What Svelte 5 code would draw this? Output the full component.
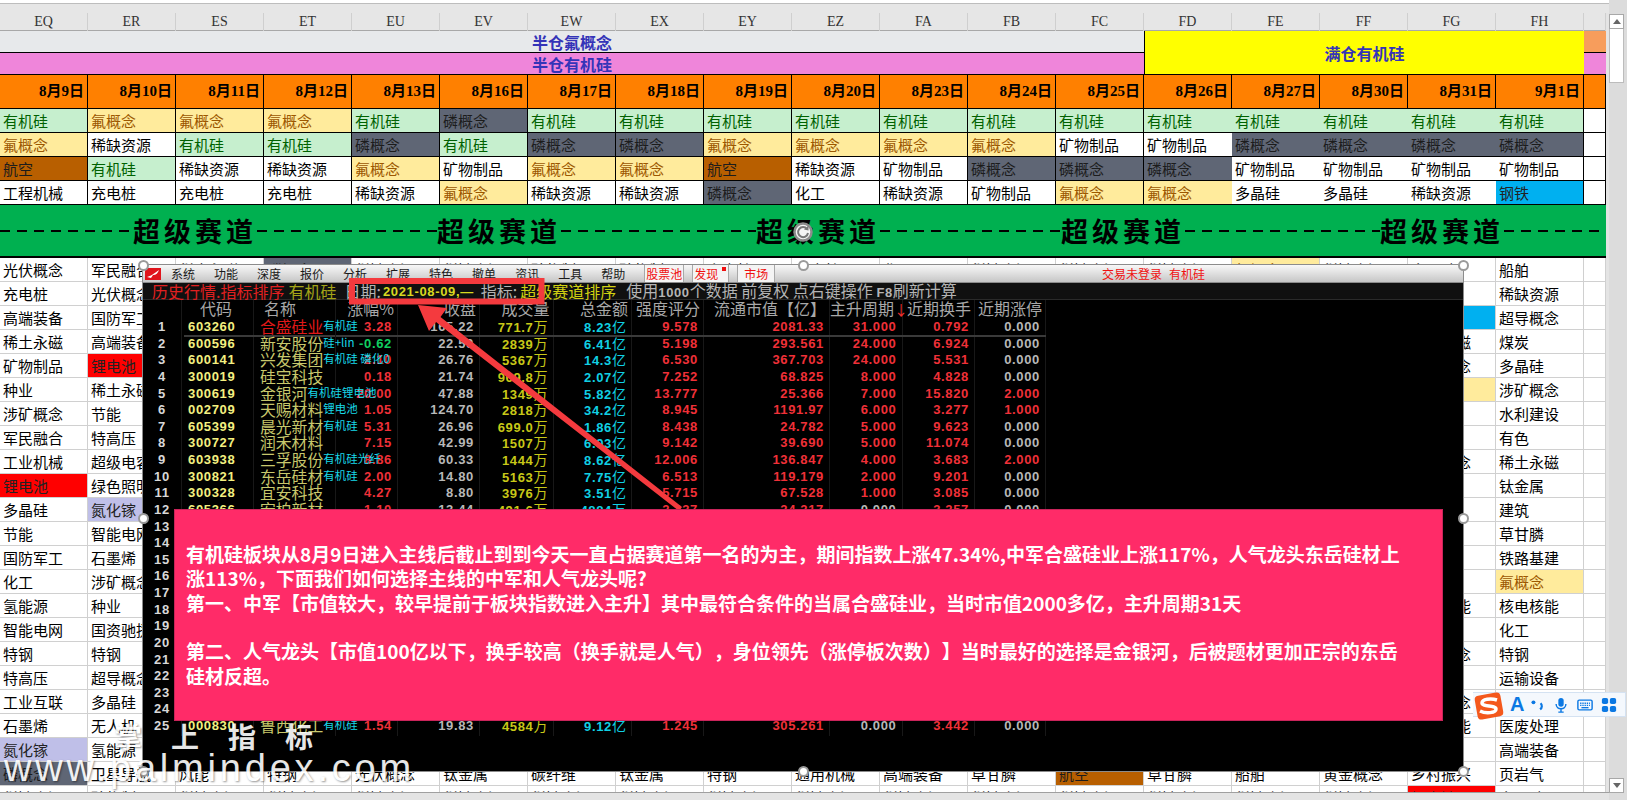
<script>
  const letters = ['EQ','ER','ES','ET','EU','EV','EW','EX','EY','EZ','FA','FB','FC','FD','FE','FF','FG','FH'];
  const dates = ['8月9日','8月10日','8月11日','8月12日','8月13日','8月16日','8月17日','8月18日','8月19日','8月20日','8月23日','8月24日','8月25日','8月26日','8月27日','8月30日','8月31日','9月1日'];

  const tones = { 有机硅: 'si', 氟概念: 'fl', 磷概念: 'ph', 航空: 'air', 钢铁: 'steel', 锂电池: 'li', 氮化镓: 'gan' };

  const concepts = [
    ['有机硅','氟概念','航空','工程机械'],
    ['氟概念','稀缺资源','有机硅','充电桩'],
    ['氟概念','有机硅','稀缺资源','充电桩'],
    ['氟概念','有机硅','稀缺资源','充电桩'],
    ['有机硅','磷概念','氟概念','稀缺资源'],
    ['磷概念','有机硅','矿物制品','氟概念'],
    ['有机硅','磷概念','氟概念','稀缺资源'],
    ['有机硅','磷概念','氟概念','稀缺资源'],
    ['有机硅','氟概念','航空','磷概念'],
    ['有机硅','氟概念','稀缺资源','化工'],
    ['有机硅','氟概念','矿物制品','稀缺资源'],
    ['有机硅','氟概念','磷概念','矿物制品'],
    ['有机硅','矿物制品','磷概念','氟概念'],
    ['有机硅','矿物制品','磷概念','氟概念'],
    ['有机硅','磷概念','矿物制品','多晶硅'],
    ['有机硅','磷概念','矿物制品','多晶硅'],
    ['有机硅','磷概念','矿物制品','稀缺资源'],
    ['有机硅','磷概念','矿物制品','钢铁']
  ];

  // only the cells that the window leaves uncovered carry text in the middle columns
  const gap = (top, bottom) => [top, ...Array(20).fill(''), bottom, '稀缺资源'];
  const lower = [
    ['光伏概念','充电桩','高端装备','稀土永磁','矿物制品','种业','涉矿概念','军民融合','工业机械','锂电池','多晶硅','节能','国防军工','化工','氢能源','智能电网','特钢','特高压','工业互联','石墨烯','氮化镓','磷概念','稀缺资源'],
    ['军民融合','光伏概念','国防军工','高端装备','锂电池','稀土永磁','节能','特高压','超级电容','绿色照明','氮化镓','智能电网','石墨烯','涉矿概念','种业','国资驰援','特钢','超导概念','多晶硅','无人机','氢能源','卫星导航','矿物制品'],
    gap('稀土永磁','风能'),
    gap('磷概念','特钢'),
    gap('稀缺资源','光伏概念'),
    gap('稀缺资源','钛金属'),
    gap('矿物制品','碳纤维'),
    gap('矿物制品','钛金属'),
    gap('充电桩','特钢'),
    gap('充电桩','通用机械'),
    gap('化工','高端装备'),
    gap('稀缺资源','草甘膦'),
    gap('稀缺资源','航空'),
    gap('稀缺资源','草甘膦'),
    gap('氟概念','船舶'),
    gap('稀缺资源','黄金概念'),
    ['多晶硅','','钢铁','稀土永磁','涉矿概念','氟概念','','','超导概念','','','','','','核电核能','','军工概念','','光伏概念','储能电能','','乡村振兴','锂电池'],
    ['船舶','稀缺资源','超导概念','煤炭','多晶硅','涉矿概念','水利建设','有色','稀土永磁','钛金属','建筑','草甘膦','铁路基建','氟概念','核电核能','化工','特钢','运输设备','军民融合','医废处理','高端装备','页岩气','多晶硅']
  ];

  const bandDashes = [133, 180, 195, 181, 195];

  const menus = ['系统','功能','深度','报价','分析','扩展','特色','撤单','资讯','工具','帮助'];

  const heads = [
    ['', 'c'], ['代码', 'c code-h'], ['名称', 'l name-h'], ['涨幅%', ''], ['收盘', ''], ['成交量', ''], ['总金额', ''],
    ['强度评分', ''], ['流通市值【亿】', ''], ['主升周期', 'arrow'], ['近期换手', ''], ['近期涨停', '']
  ];

  const stocks = [
    ['603260','合盛硅业','有机硅','3.28','165.22','771.7万','8.23亿','9.578','2081.33','31.000','0.792','0.000'],
    ['600596','新安股份','硅+lin','-0.62','22.59','2839万','6.41亿','5.198','293.561','24.000','6.924','0.000'],
    ['600141','兴发集团','有机硅 磷化0','2.10','26.76','5367万','14.3亿','6.530','367.703','24.000','5.531','0.000'],
    ['300019','硅宝科技','','0.18','21.74','969.8万','2.07亿','7.252','68.825','8.000','4.828','0.000'],
    ['300619','金银河','有机硅锂电池','20.00','47.88','1349万','5.82亿','13.777','25.366','7.000','15.820','2.000'],
    ['002709','天赐材料','锂电池','1.05','124.70','2818万','34.2亿','8.945','1191.97','6.000','3.277','1.000'],
    ['605399','晨光新材','有机硅','5.31','26.96','699.0万','1.86亿','8.438','24.782','5.000','9.623','0.000'],
    ['300727','润禾材料','','7.15','42.99','1507万','6.93亿','9.142','39.690','5.000','11.074','0.000'],
    ['603938','三孚股份','有机硅光纤','8.86','60.33','1444万','8.62亿','12.006','136.847','4.000','3.683','2.000'],
    ['300821','东岳硅材','有机硅','2.00','14.80','5163万','7.75亿','6.513','119.179','2.000','9.201','0.000'],
    ['300328','宜安科技','','4.27','8.80','3976万','3.51亿','5.715','67.528','1.000','3.085','0.000'],
    ['605366','宏柏新材','','1.10','13.44','491.6万','4884万','2.337','24.217','0.000','3.257','0.000']
  ];
  const blanks = Array(12).fill(null);
  const last = ['000830','鲁西化工','有机硅','1.54','19.83','4584万','9.12亿','1.245','305.261','0.000','3.442','0.000'];
  const rows = [...stocks, ...blanks, last];

  const handles = ['tl','tc','tr','ml','mr','bl','bc','br'];
</script>

{#snippet unit(v)}{v.slice(0, -1)}<span class="unit">{v.slice(-1)}</span>{/snippet}

<div class="page">
  <div class="sheet">
    <div class="topline"></div>
    <div class="letters">
      {#each letters as l}<div>{l}</div>{/each}
      <div></div>
    </div>

    <div class="merged">
      <div class="half fluor">半仓氟概念</div>
      <div class="full">满仓有机硅</div>
      <div class="side-orange"></div>
      <div class="half silicon">半仓有机硅</div>
      <div class="side-pink"></div>
    </div>

    <div class="dates">
      {#each dates as d}<div>{d}</div>{/each}
      <div></div>
    </div>

    <div class="concepts">
      {#each concepts as col}
        {#each col as c}<div class="cell {tones[c] ?? ''}">{c}</div>{/each}
      {/each}
      {#each [0, 1, 2, 3] as _}<div class="cell"></div>{/each}
    </div>

    <div class="band">
      {#each bandDashes as w}
        <div class="dash" style="width: {w}px"></div>
        <div class="track">超级赛道</div>
      {/each}
      <div class="dash rest"></div>
    </div>

    <div class="lower">
      {#each lower as col}
        {#each col as c}<div class="cell {tones[c] ?? ''}">{c}</div>{/each}
      {/each}
      {#each Array(23) as _}<div class="cell"></div>{/each}
    </div>
    <div class="sheet-foot"></div>
  </div>

  <div class="scrollbar">
    <div class="btn"><span class="up"></span></div>
    <div class="thumb"></div>
    <div class="spacer"></div>
    <div class="btn low"><span class="down"></span></div>
  </div>

  <div class="window">
    <div class="titlebar">
      <svg class="logo" viewBox="0 0 16 12"><rect width="16" height="12" fill="#e0141c" /><path d="M2 9 C6 8 8 6 14 2 C13 5 11 7 8 7 L6 10 Z" fill="#fff" /></svg>
      <div class="menus">
        {#each menus as m}<span>{m}</span>{/each}
      </div>
      <div class="tabs">
        <span>股票池</span>
        <span>发现<i></i></span>
        <span>市场</span>
      </div>
      <div class="login"><span>交易未登录</span><span>有机硅</span></div>
    </div>
    <div class="subbar">
      <span class="s-red">历史行情.指标排序</span>
      <span class="s-olive">有机硅</span>
      <span class="s-gray s-day">日期:</span>
      <b class="s-date">2021-08-09,—</b>
      <span class="s-gray s-idx">指标:</span>
      <span class="s-yellow">超级赛道排序</span>
      <span class="s-gray s-note">使用<b>1000</b>个数据 前复权 点右键操作 <b>F8</b>刷新计算</span>
    </div>

    <div class="row head">
      {#each heads as [h, cls]}
        <div class={cls}>{h}{#if cls === 'arrow'}<em>↓</em>{/if}</div>
      {/each}
    </div>
    {#each rows as r, i}
      <div class="row" class:first={i === 0}>
        <div class="no">{i + 1}</div>
        {#if r}
          <div class="code">{r[0]}</div>
          <div class="name" class:hot={i === 0}>{r[1]}<span class="tag">{r[2]}</span></div>
          <div class="num" class:red={r[3][0] !== '-'} class:green={r[3][0] === '-'}>{r[3]}</div>
          <div class="num gray">{r[4]}</div>
          <div class="num yellow">{@render unit(r[5])}</div>
          <div class="num cyan">{@render unit(r[6])}</div>
          <div class="num red">{r[7]}</div>
          <div class="num red">{r[8]}</div>
          <div class="num" class:red={r[9] !== '0.000'} class:gray={r[9] === '0.000'}>{r[9]}</div>
          <div class="num red">{r[10]}</div>
          <div class="num" class:red={r[11] !== '0.000'} class:gray={r[11] === '0.000'}>{r[11]}</div>
        {:else}
          {#each Array(11) as _}<div></div>{/each}
        {/if}
      </div>
    {/each}

    <svg class="rotate" viewBox="0 0 22 22">
      <circle cx="11" cy="11" r="8.5" fill="#f4f4f4" stroke="#8c8c8c" stroke-width="2.5" />
      <path d="M15 8 A5 5 0 1 0 16 12" fill="none" stroke="#777" stroke-width="2" />
      <path d="M16.5 4.5 L16.5 9.5 L12 8.5 Z" fill="#777" />
    </svg>
  </div>

  <svg class="marks" viewBox="0 0 1627 800">
    <rect x="352" y="281" width="189.500" height="20.500" fill="none" stroke="#f43a3e" stroke-width="6" />
    <polygon points="418,305 447,308 440.500,317 682,507 679,511 436,322 429,331" fill="#f43a3e" />
  </svg>

  <div class="note">
    <div class="note-text">
      <p>有机硅板块从8月9日进入主线后截止到到今天一直占据赛道第一名的为主，期间指数上涨47.34%,中军合盛硅业上涨117%，人气龙头东岳硅材上</p>
      <p>涨113%，下面我们如何选择主线的中军和人气龙头呢?</p>
      <p>第一、中军【市值较大，较早提前于板块指数进入主升】其中最符合条件的当属合盛硅业，当时市值2000多亿，主升周期31天</p>
      <p>&nbsp;</p>
      <p>第二、人气龙头【市值100亿以下，换手较高（换手就是人气），身位领先（涨停板次数）】当时最好的选择是金银河，后被题材更加正宗的东岳</p>
      <p>硅材反超。</p>
    </div>
  </div>

  <div class="frame">
    {#each handles as h}<span class="handle {h}"></span>{/each}
  </div>

  <div class="brand">
    <div class="brand-cn"><span>掌</span><span>上</span><span>指</span><span>标</span></div>
    <div class="brand-url">www.palmindex.com</div>
  </div>

  <div class="ime">
    <svg class="ime-logo" viewBox="0 0 32 30">
      <rect x="3" y="3" width="26" height="24" rx="4" fill="#f4581c" transform="rotate(-10 16 15)" />
      <path d="M24 9 C18 7 9 8 9 12 C9 16 23 14 23 18 C23 22 13 23 7 20" fill="none" stroke="#fff" stroke-width="3.500" />
    </svg>
    <span class="ime-a">A</span>
    <svg class="ime-ico" viewBox="0 0 18 18"><circle cx="5" cy="6" r="2.200" fill="#0b78e3" /><path d="M13 7 C15 9 15 12 12.500 14" fill="none" stroke="#0b78e3" stroke-width="2.400" /></svg>
    <svg class="ime-ico" viewBox="0 0 18 18"><rect x="6" y="1" width="6" height="10" rx="3" fill="#0b78e3" /><path d="M3.500 8 C3.500 15 14.500 15 14.500 8 M9 13 V17 M6 17 H12" fill="none" stroke="#0b78e3" stroke-width="1.600" /></svg>
    <svg class="ime-ico" viewBox="0 0 18 18"><rect x="1" y="3.500" width="16" height="11" rx="1.500" fill="none" stroke="#0b78e3" stroke-width="1.600" /><path d="M3.500 7 H14.500 M3.500 9.500 H14.500" stroke="#0b78e3" stroke-width="1.500" stroke-dasharray="1.500 1" /><path d="M5 12 H13" stroke="#0b78e3" stroke-width="1.500" /></svg>
    <svg class="ime-ico" viewBox="0 0 18 18"><rect x="1" y="1" width="7" height="7" rx="2" fill="#0b78e3" /><rect x="10" y="1" width="7" height="7" rx="2" fill="#0b78e3" /><rect x="1" y="10" width="7" height="7" rx="2" fill="#0b78e3" /><rect x="10" y="10" width="7" height="7" rx="2" fill="#0b78e3" /></svg>
  </div>
</div>

<style>
  :global(body) {
    margin: 0;
    background: #e4e4e4;
  }

  * {
    box-sizing: border-box;
  }

  .page {
    position: relative;
    display: flex;
    width: 1627px;
    height: 800px;
    overflow: hidden;
    font-family: "Noto Sans CJK SC", "Liberation Sans", sans-serif;
    color: #000;
  }

  .sheet {
    width: 1609px;
    flex: none;
    display: flex;
    flex-direction: column;
    background: #e4e4e4;
  }

  .topline {
    height: 13px;
    background: #e6e6e6;
    border-top: 3px solid #fff;
    box-shadow: inset 0 1px 0 #bdbdbd;
  }

  .letters,
  .dates {
    display: grid;
    grid-template-columns: repeat(18, 88px) 22px;
    width: 1606px;
  }

  .letters {
    height: 18px;
    background: #e6e6e6;
    border-bottom: 1px solid #a8a8a8;
    font: 14px/18px "Liberation Serif", serif;
    color: #333;
    text-align: center;
  }

  .letters div {
    border-right: 1px solid #cfcfcf;
  }

  .merged {
    display: grid;
    grid-template-columns: 1144px 440px 22px;
    grid-template-rows: 22px 22px;
    width: 1606px;
    font-size: 16px;
    font-weight: 700;
    color: #3434b8;
  }

  .half,
  .full {
    display: flex;
    align-items: center;
    justify-content: center;
    border-bottom: 1px solid #000;
  }

  .fluor {
    background: #e7e9eb;
  }

  .silicon {
    background: #ef85da;
  }

  .full {
    grid-row: span 2;
    background: #ffff00;
    border-left: 1px solid #000;
  }

  .side-orange {
    background: #f79d5c;
    border-bottom: 1px solid #000;
  }

  .side-pink {
    background: #ef85da;
    border-bottom: 1px solid #000;
  }

  .dates {
    height: 34px;
    background: #ff8000;
    border-bottom: 1px solid #000;
    font: 700 15px/33px "Liberation Serif", "Noto Sans CJK SC", serif;
    text-align: right;
  }

  .dates div {
    border-right: 1px solid #000;
    padding-right: 3px;
  }

  .concepts,
  .lower {
    display: grid;
    grid-auto-flow: column;
    grid-template-columns: repeat(18, 88px) 22px;
    width: 1606px;
    font-size: 15px;
  }

  .concepts {
    grid-template-rows: repeat(4, 24px);
    background: #fff;
  }

  .lower {
    grid-template-rows: repeat(23, 24px);
    height: 534px;
    overflow: hidden;
    background: #fff;
  }

  .cell {
    padding-left: 3px;
    line-height: 23px;
    white-space: nowrap;
    overflow: hidden;
    border-right: 1px solid #000;
    border-bottom: 1px solid #000;
  }

  /* FD to FG have no black column lines in the concept rows */
  .concepts .cell:nth-child(n + 53):nth-child(-n + 68) {
    border-right: 0;
  }

  .lower .cell {
    border-color: #d0d0d0;
  }

  .si {
    background: #c6efce;
    color: #006100;
  }

  .fl {
    background: #ffeb9c;
    color: #9c5700;
  }

  .ph {
    background: #5f6675;
    color: #1c1c1c;
  }

  .air {
    background: #b85f00;
    color: #1c1c1c;
  }

  .steel {
    background: #00b0f0;
    color: #222;
  }

  .li {
    background: #ff0000;
    color: #222;
  }

  .gan {
    background: #bfbfe8;
    color: #222;
  }

  .band {
    display: flex;
    align-items: center;
    width: 1606px;
    height: 53px;
    background: #00b050;
    border-bottom: 2px solid #000;
  }

  .dash {
    height: 2px;
    flex: none;
    background: repeating-linear-gradient(90deg, #000 0 10px, transparent 10px 17px);
  }

  .dash.rest {
    flex: 1;
  }

  .track {
    width: 124px;
    flex: none;
    font-size: 27px;
    font-weight: 700;
    letter-spacing: 4px;
    line-height: 50px;
    white-space: nowrap;
  }

  .sheet-foot {
    flex: 1;
    border-top: 1px solid #a0a0a0;
    background: #e4e4e4;
  }

  .scrollbar {
    flex: 1;
    display: flex;
    flex-direction: column;
    padding: 14px 3px 7px 0;
    background: #dcdcdc;
  }

  .btn {
    height: 15px;
    background: #fff;
    border: 1px solid #a8a8a8;
    display: flex;
    align-items: center;
    justify-content: center;
  }

  .up {
    border: 4px solid transparent;
    border-top: 0;
    border-bottom: 5px solid #666;
  }

  .down {
    border: 4px solid transparent;
    border-bottom: 0;
    border-top: 5px solid #666;
  }

  .thumb {
    height: 54px;
    background: #fff;
    border: 1px solid #bcbcbc;
    border-top: 0;
  }

  .spacer {
    flex: 1;
  }

  .window {
    position: absolute;
    isolation: isolate;
    left: 143px;
    top: 265px;
    width: 1320px;
    height: 506px;
    background: #000;
    outline: 1px solid #8c8c8c;
    color: #bdbdbd;
  }

  .titlebar {
    position: relative;
    display: flex;
    align-items: center;
    height: 18px;
    background: linear-gradient(#f8f8f8, #c6c6c6);
    border-bottom: 1px solid #8c8c8c;
    font-size: 12px;
    line-height: 17px;
    color: #1a1a1a;
  }

  .logo {
    width: 16px;
    height: 12px;
    margin-left: 2px;
    flex: none;
  }

  .menus {
    display: flex;
    gap: 19px;
    margin-left: 10px;
  }

  .tabs {
    display: flex;
    margin-left: 19px;
    color: #f01010;
    gap: 8px;
  }

  .tabs span {
    position: relative;
    padding: 0 1px;
    height: 17px;
    border-left: 1px solid #a8a8a8;
    border-right: 1px solid #a8a8a8;
    background: #f4f4f4;
  }

  .tabs span:nth-child(2) {
    padding-right: 10px;
  }

  .tabs span:nth-child(3) {
    padding: 0 6px;
  }

  .tabs i {
    position: absolute;
    right: 2px;
    top: 2px;
    width: 4px;
    height: 4px;
    background: #f01010;
  }

  .login {
    display: flex;
    gap: 7px;
    margin: 0 258px 0 auto;
    color: #f01010;
  }

  .subbar {
    position: relative;
    display: flex;
    align-items: center;
    height: 17px;
    background: #101010;
    border-bottom: 1px solid #2a2a2a;
    font-size: 16px;
    line-height: 16px;
    white-space: nowrap;
  }

  .s-red {
    margin-left: 9px;
    color: #e02020;
  }

  .s-olive {
    margin-left: 4px;
    color: #a4a418;
  }

  .s-gray {
    color: #b4b4b4;
  }

  .s-day {
    margin-left: 8px;
  }

  .s-date {
    margin-left: 2px;
    font: 700 13px "Liberation Sans", sans-serif;
    letter-spacing: 0.65px;
    color: #d8d820;
  }

  .s-idx {
    margin-left: 7px;
  }

  .s-yellow {
    margin-left: 3px;
    color: #d0d010;
  }

  .s-note {
    margin-left: 10px;
  }

  .s-note b {
    font: 700 13px "Liberation Sans", sans-serif;
    letter-spacing: 0.6px;
  }

  .row {
    display: grid;
    grid-template-columns: 39px 72px 82px 62px 82px 73.500px 78.500px 72px 126px 72.500px 72.500px 71px;
    height: 16.630px;
    font: 700 13px/16.630px "Liberation Sans", sans-serif;
    letter-spacing: 0.65px;
    white-space: nowrap;
  }

  .row > div {
    border-right: 1px solid #181818;
  }

  .row.first {
    position: relative;
  }

  .row.first::after {
    content: "";
    position: absolute;
    left: 41px;
    width: 862px;
    top: 15.500px;
    height: 2px;
    background: #3a3a3a;
  }

  .head {
    height: 19px;
    font: 400 16px/17px "Noto Sans CJK SC", sans-serif;
    letter-spacing: 0;
    color: #a8a8a8;
    text-align: right;
  }

  .head > div {
    padding-right: 3px;
  }

  .head .c {
    text-align: center;
  }

  .head .l {
    text-align: left;
    padding-left: 10px;
  }

  .head em {
    font-style: normal;
    color: #f03030;
    font-size: 14px;
  }

  .no {
    text-align: center;
    color: #d8d8d8;
  }

  .code {
    padding-left: 6px;
    color: #f4f080;
  }

  .name {
    position: relative;
    z-index: 1;
    padding-left: 6px;
    font: 400 15.800px/16.630px "Noto Sans CJK SC", sans-serif;
    letter-spacing: 0;
    color: #c8c86c;
  }

  .name.hot {
    color: #e01818;
  }

  .tag {
    position: relative;
    top: -3px;
    font-size: 11.500px;
    line-height: 1;
    color: #18d8e8;
  }

  .num {
    text-align: right;
    padding-right: 5px;
  }

  .unit {
    font: 400 14px/1 "Noto Sans CJK SC", sans-serif;
    letter-spacing: 0;
  }

  .red {
    color: #f03038;
  }

  .green {
    color: #10d060;
  }

  .gray {
    color: #b8b8b8;
  }

  .yellow {
    color: #c8c818;
  }

  .cyan {
    color: #10d0e4;
  }

  .frame {
    position: absolute;
    left: 143px;
    top: 265px;
    width: 1320px;
    height: 506px;
    pointer-events: none;
  }

  .handle {
    position: absolute;
    width: 11px;
    height: 11px;
    margin: -5.500px 0 0 -5.500px;
    background: #fff;
    border: 2px solid #9a9a9a;
    border-radius: 50%;
  }

  .tl, .tc, .tr { top: 0; }
  .ml, .mr { top: 50%; }
  .bl, .bc, .br { top: 100%; }
  .tl, .ml, .bl { left: 0; }
  .tc, .bc { left: 50%; }
  .tr, .mr, .br { left: 100%; }

  .rotate {
    position: absolute;
    left: calc(50% - 11px);
    top: -44px;
    width: 22px;
    height: 22px;
  }

  .marks {
    position: absolute;
    left: 0;
    top: 0;
    width: 1627px;
    height: 800px;
    pointer-events: none;
  }

  .note {
    position: absolute;
    left: 174px;
    top: 509px;
    width: 1269px;
    height: 212px;
    display: flex;
    align-items: center;
    padding-left: 11px;
    background: #ff2b68;
    border: 1px solid #c9245a;
    color: #fff;
    font-size: 19px;
    font-weight: 700;
    line-height: 24.300px;
    white-space: nowrap;
    text-spacing-trim: space-all;
  }

  .note p {
    margin: 0;
  }

  .brand {
    position: absolute;
    left: 4px;
    top: 720px;
    color: #fff;
    opacity: 0.9;
    text-shadow: 1px 1px 2px rgba(0, 0, 0, 0.45);
    pointer-events: none;
  }

  .brand-cn {
    display: flex;
    gap: 29px;
    margin-left: 110px;
    font-size: 28px;
    font-weight: 700;
    line-height: 33px;
  }

  .brand-url {
    margin-top: -6px;
    font: 38px/42px "Liberation Sans", sans-serif;
    letter-spacing: 3.800px;
  }

  .ime {
    position: absolute;
    left: 1473px;
    top: 692px;
    width: 153px;
    height: 25px;
    display: flex;
    align-items: center;
    background: #f4f8fd;
    border: 1px solid #d4e2f2;
    border-left: 0;
  }

  .ime-logo {
    width: 32px;
    height: 30px;
    flex: none;
    margin-top: 2px;
  }

  .ime-a {
    width: 26px;
    padding-left: 5px;
    font: 700 20px "Liberation Sans", sans-serif;
    color: #0b78e3;
  }

  .ime-ico {
    width: 16px;
    height: 16px;
    flex: none;
    margin-right: 8px;
  }
</style>
